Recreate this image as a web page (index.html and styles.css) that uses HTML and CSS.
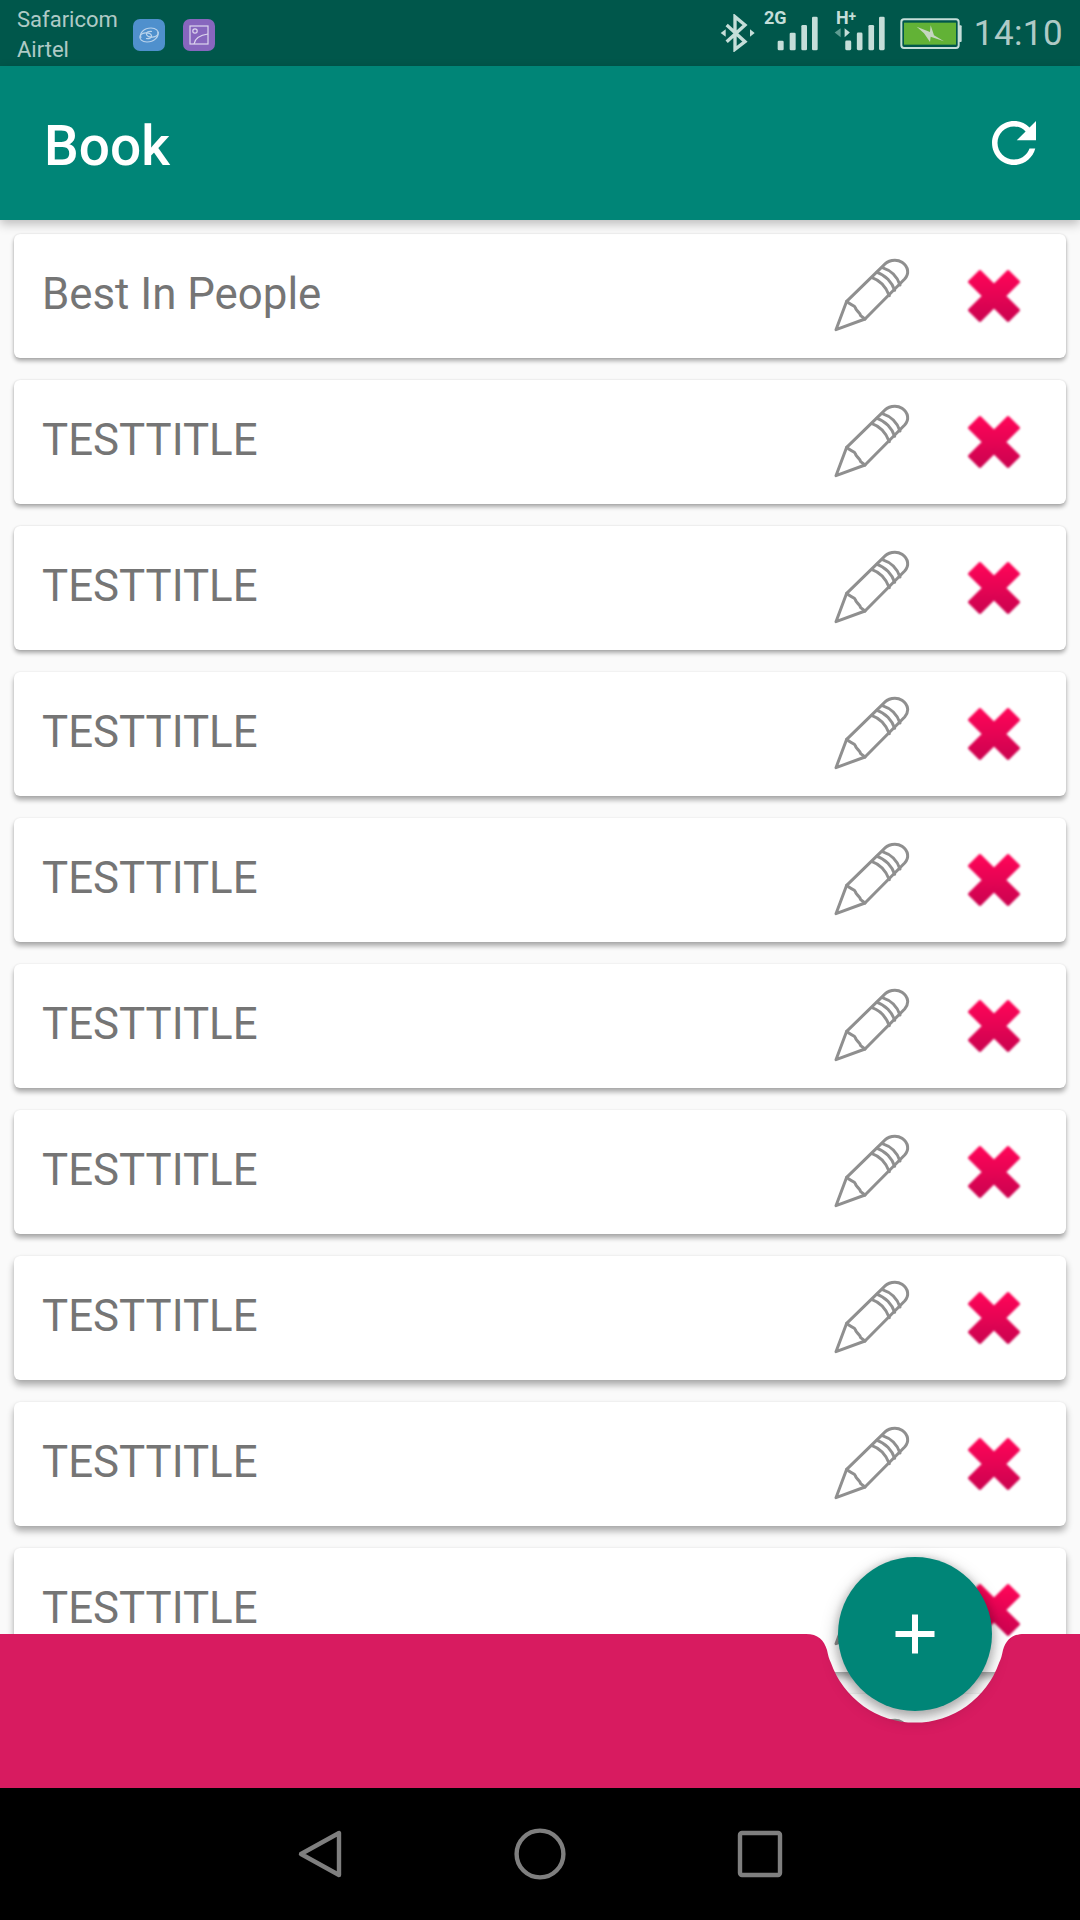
FILE: index.html
```html
<!DOCTYPE html>
<html lang="en">
<head>
    <meta charset="UTF-8">
    <meta name="viewport" content="width=device-width, initial-scale=1.0">
    <title>Book</title>
    <link rel="stylesheet" href="styles.css">
</head>
<body>
    <!-- shared icons -->
    <svg class="icon-defs">
        <defs>
            <linearGradient id="crossFill" x1="0" y1="0" x2="0" y2="1">
                <stop offset="0" stop-color="#ff0558"/>
                <stop offset="1" stop-color="#cc0350"/>
            </linearGradient>
            <symbol id="pencil" viewBox="90 40 252 252">
                <g fill="none" stroke="#8f8f8f" stroke-width="9" stroke-linecap="round" stroke-linejoin="round">
                    <path d="M108 270 L140 185 L250 78 C262 62 288 56 306 68 C326 82 328 102 314 118 L195 238 Z"/>
                    <path d="M140 185 C150 196 164 196 166 204 C168 214 180 218 182 228 L195 238"/>
                    <path d="M216 114 C240 122 258 142 268 168"/>
                    <path d="M231 98 C256 106 276 128 284 152"/>
                    <path d="M247 84 C272 92 292 112 300 136"/>
                </g>
            </symbol>
            <symbol id="cross" viewBox="0 0 192 192">
                <polygon points="96,63 141,18 174,51 129,96 174,141 141,174 96,129 51,174 18,141 63,96 18,51 51,18" fill="url(#crossFill)" stroke="url(#crossFill)" stroke-width="10" stroke-linejoin="round"/>
            </symbol>
        </defs>
    </svg>

    <div class="phone">
        <div class="status-bar">
            <div class="carriers">
                <div>Safaricom</div>
                <div>Airtel</div>
            </div>
            <div class="app-badge badge-blue">
                <svg width="22" height="22" viewBox="0 0 22 22" fill="none" stroke="#b9d3ec" stroke-width="1.2">
                    <path d="M3 14 C1 9 6 4 13 4 C18 4 21 7 20 10 C18 14 10 14 8.5 10.5 C8 8 11 7 14 7.5"/>
                    <path d="M20 8 C21 13 16 18 9 18 C4 18 1 15 2 12 C4 8 12 8 13.5 11.5 C14 14 11 15 8 14.5"/>
                </svg>
            </div>
            <div class="app-badge badge-purple">
                <svg width="22" height="22" viewBox="0 0 22 22" fill="none" stroke="#ddd6ee" stroke-width="1.2">
                    <rect x="2" y="2" width="18" height="18"/>
                    <circle cx="7" cy="7" r="2.2"/>
                    <path d="M6 20 C7 14 12 11 20 10"/>
                </svg>
            </div>
            <div class="status-right">
                <svg class="bluetooth" width="35" height="38" viewBox="115 42 105 114">
                    <polyline points="135,75 190,125 160,148 160,50 190,75 135,125" fill="none" stroke="#c5ded9" stroke-width="10"/>
                    <polygon points="132,88 132,110 117,99" fill="#c5ded9"/>
                    <polygon points="205,88 205,110 219,99" fill="#c5ded9"/>
                </svg>
                <svg class="signal" width="58" height="52" viewBox="243 0 174 156">
                    <text x="249" y="72" class="signal-label">2G</text>
                    <g fill="#c5ded9">
                        <rect x="290" y="122" width="18" height="29" rx="4"/>
                        <rect x="326" y="98" width="18" height="53" rx="4"/>
                        <rect x="361" y="75" width="17" height="76" rx="4"/>
                        <rect x="393" y="50" width="17" height="101" rx="4"/>
                    </g>
                </svg>
                <svg class="signal" width="51" height="52" viewBox="458 0 154 156">
                    <text x="464" y="72" class="signal-label">H<tspan class="signal-plus" dy="-10">+</tspan></text>
                    <polygon points="478,85 478,112 460,98" fill="#5f9c92"/>
                    <polygon points="490,85 490,112 506,98" fill="#c5ded9"/>
                    <g fill="#c5ded9">
                        <rect x="492" y="122" width="18" height="29" rx="4"/>
                        <rect x="527" y="98" width="17" height="53" rx="4"/>
                        <rect x="562" y="75" width="17" height="76" rx="4"/>
                        <rect x="594" y="50" width="17" height="101" rx="4"/>
                    </g>
                </svg>
                <svg class="battery" width="65" height="35" viewBox="655 50 195 105">
                    <rect x="662" y="60" width="172" height="86" rx="8" fill="none" stroke="#c5ded9" stroke-width="6"/>
                    <rect x="670" y="70" width="156" height="66" fill="#62b236"/>
                    <rect x="834" y="78" width="9" height="50" rx="3" fill="#c5ded9"/>
                    <polygon points="708,82 748,98 750,78 760,108 790,126 750,112 748,128 730,102" fill="#c5d6c0"/>
                </svg>
                <span class="clock">14:10</span>
            </div>
        </div>

        <div class="app-bar">
            <span class="app-title">Book</span>
            <svg class="refresh" width="66" height="66" viewBox="0 0 24 24" fill="#fff">
                <path d="M17.65 6.35C16.2 4.9 14.21 4 12 4c-4.42 0-7.99 3.58-7.99 8s3.57 8 7.99 8c3.73 0 6.84-2.55 7.73-6h-2.08c-.82 2.33-3.04 4-5.65 4-3.31 0-6-2.69-6-6s2.69-6 6-6c1.66 0 3.14.69 4.22 1.78L13 11h7V4l-2.35 2.35z"/>
            </svg>
        </div>

        <div class="content">
            <div class="book-list">
                <div class="book-row">
                    <span class="book-title">Best In People</span>
                    <svg class="edit-icon"><use href="#pencil"/></svg>
                    <svg class="delete-icon"><use href="#cross"/></svg>
                </div>
                <div class="book-row">
                    <span class="book-title">TESTTITLE</span>
                    <svg class="edit-icon"><use href="#pencil"/></svg>
                    <svg class="delete-icon"><use href="#cross"/></svg>
                </div>
                <div class="book-row">
                    <span class="book-title">TESTTITLE</span>
                    <svg class="edit-icon"><use href="#pencil"/></svg>
                    <svg class="delete-icon"><use href="#cross"/></svg>
                </div>
                <div class="book-row">
                    <span class="book-title">TESTTITLE</span>
                    <svg class="edit-icon"><use href="#pencil"/></svg>
                    <svg class="delete-icon"><use href="#cross"/></svg>
                </div>
                <div class="book-row">
                    <span class="book-title">TESTTITLE</span>
                    <svg class="edit-icon"><use href="#pencil"/></svg>
                    <svg class="delete-icon"><use href="#cross"/></svg>
                </div>
                <div class="book-row">
                    <span class="book-title">TESTTITLE</span>
                    <svg class="edit-icon"><use href="#pencil"/></svg>
                    <svg class="delete-icon"><use href="#cross"/></svg>
                </div>
                <div class="book-row">
                    <span class="book-title">TESTTITLE</span>
                    <svg class="edit-icon"><use href="#pencil"/></svg>
                    <svg class="delete-icon"><use href="#cross"/></svg>
                </div>
                <div class="book-row">
                    <span class="book-title">TESTTITLE</span>
                    <svg class="edit-icon"><use href="#pencil"/></svg>
                    <svg class="delete-icon"><use href="#cross"/></svg>
                </div>
                <div class="book-row">
                    <span class="book-title">TESTTITLE</span>
                    <svg class="edit-icon"><use href="#pencil"/></svg>
                    <svg class="delete-icon"><use href="#cross"/></svg>
                </div>
                <div class="book-row">
                    <span class="book-title">TESTTITLE</span>
                    <svg class="edit-icon"><use href="#pencil"/></svg>
                    <svg class="delete-icon"><use href="#cross"/></svg>
                </div>
                <div class="book-row">
                    <span class="book-title">TESTTITLE</span>
                    <svg class="edit-icon"><use href="#pencil"/></svg>
                    <svg class="delete-icon"><use href="#cross"/></svg>
                </div>
            </div>

            <!-- bottom bar with the cradle for the round button -->
            <svg class="bottom-bar" width="1080" height="154" viewBox="0 0 1080 154">
                <path d="M0 0 H806 C818 0 824 6 827 16 C828 21 829 25 831 29 A89 89 0 0 0 999 29 C1001 25 1002 21 1003 16 C1006 6 1012 0 1024 0 H1080 V154 H0 Z" fill="#d81b60"/>
            </svg>

            <div class="fab">
                <svg width="40" height="40" viewBox="0 0 40 40" fill="#fff">
                    <rect x="0.5" y="17" width="39" height="6"/>
                    <rect x="17" y="0.5" width="6" height="39"/>
                </svg>
            </div>
        </div>

        <div class="nav-bar">
            <svg width="60" height="60" viewBox="0 0 60 60" fill="none" stroke="#7f7f7f" stroke-width="4.4" stroke-linejoin="round">
                <polygon points="11,30 49,9 49,51"/>
            </svg>
            <svg width="60" height="60" viewBox="0 0 60 60" fill="none" stroke="#7f7f7f" stroke-width="4.4">
                <circle cx="30" cy="30" r="23.4"/>
            </svg>
            <svg width="60" height="60" viewBox="0 0 60 60" fill="none" stroke="#7f7f7f" stroke-width="4.4">
                <rect x="10" y="9" width="40" height="42" rx="2"/>
            </svg>
        </div>
    </div>
</body>
</html>
```

FILE: styles.css
```css
* {
    box-sizing: border-box;
}

body {
    font-family: 'Roboto', sans-serif;
    margin: 0;
    padding: 0;
    background-color: #000;
}

.icon-defs {
    position: absolute;
    width: 0;
    height: 0;
}

.phone {
    width: 1080px;
    height: 1920px;
    display: flex;
    flex-direction: column;
    overflow: hidden;
}

/* status bar */
.status-bar {
    height: 66px;
    flex-shrink: 0;
    background-color: #00574b;
    color: rgba(255, 255, 255, 0.7);
    display: flex;
    align-items: center;
    padding: 4px 17px 0 17px;
}

.carriers {
    font-size: 22px;
    line-height: 30px;
    width: 116px;
}

.app-badge {
    width: 32px;
    height: 32px;
    border-radius: 7px;
    margin-right: 18px;
    display: flex;
    align-items: center;
    justify-content: center;
}

.badge-blue {
    background-color: #4f90cd;
}

.badge-purple {
    background-color: #8766be;
}

.status-right {
    margin-left: auto;
    display: flex;
    align-items: center;
    margin-top: -4px;
}

.status-right svg {
    flex-shrink: 0;
}

.bluetooth {
    margin-right: 7px;
}

.signal {
    margin-right: 14px;
    margin-bottom: 14px;
}

.signal-label {
    font-family: 'Roboto', sans-serif;
    font-size: 54px;
    font-weight: 700;
    fill: #c5ded9;
}

.signal-plus {
    font-size: 42px;
}

.battery {
    margin-right: 10px;
}

.clock {
    font-size: 35px;
    font-weight: 400;
    letter-spacing: 0.4px;
}

/* app bar */
.app-bar {
    height: 154px;
    flex-shrink: 0;
    background-color: #008577;
    display: flex;
    align-items: center;
    justify-content: space-between;
    padding: 0 33px 0 44px;
    box-shadow: 0 4px 10px rgba(0, 0, 0, 0.25);
    position: relative;
    z-index: 2;
}

.app-title {
    color: #fff;
    font-size: 55px;
    font-weight: 500;
    padding-top: 6px;
}

/* list */
.content {
    flex: 1;
    position: relative;
    overflow: hidden;
    background-color: #fafafa;
}

.book-list {
    padding: 14px 14px 0;
    display: flex;
    flex-direction: column;
    gap: 22px;
}

.book-row {
    height: 124px;
    flex-shrink: 0;
    background-color: #fff;
    border-radius: 6px;
    box-shadow: 0 3px 4px rgba(0, 0, 0, 0.32), 0 0 2px rgba(0, 0, 0, 0.12);
    display: flex;
    align-items: center;
    padding: 0 42px 0 28px;
}

/* shadow gets longer further down the screen */
.book-row:nth-child(n+4) {
    box-shadow: 0 4px 5px rgba(0, 0, 0, 0.32), 0 0 2px rgba(0, 0, 0, 0.1);
}

.book-row:nth-child(n+8) {
    box-shadow: 0 5px 7px rgba(0, 0, 0, 0.32), 0 0 2px rgba(0, 0, 0, 0.08);
}

.book-title {
    flex: 1;
    font-size: 43.8px;
    color: #757575;
    padding-bottom: 4px;
}

.edit-icon {
    width: 84px;
    height: 84px;
    margin-right: 50px;
    margin-bottom: 2px;
}

.delete-icon {
    width: 60px;
    height: 60px;
    filter: blur(0.8px);
}

/* bottom bar sits over the end of the list */
.bottom-bar {
    position: absolute;
    left: 0;
    bottom: 0;
    display: block;
}

.fab {
    position: absolute;
    right: 88px;
    bottom: 77px;
    width: 154px;
    height: 154px;
    border-radius: 50%;
    background-color: #008577;
    box-shadow: 0 2px 6px 3px rgba(0, 0, 0, 0.12), 0 6px 18px rgba(0, 0, 0, 0.28);
    display: flex;
    align-items: center;
    justify-content: center;
}

/* system nav */
.nav-bar {
    height: 132px;
    flex-shrink: 0;
    background-color: #000;
    display: flex;
    align-items: center;
    justify-content: center;
    gap: 160px;
}
```
